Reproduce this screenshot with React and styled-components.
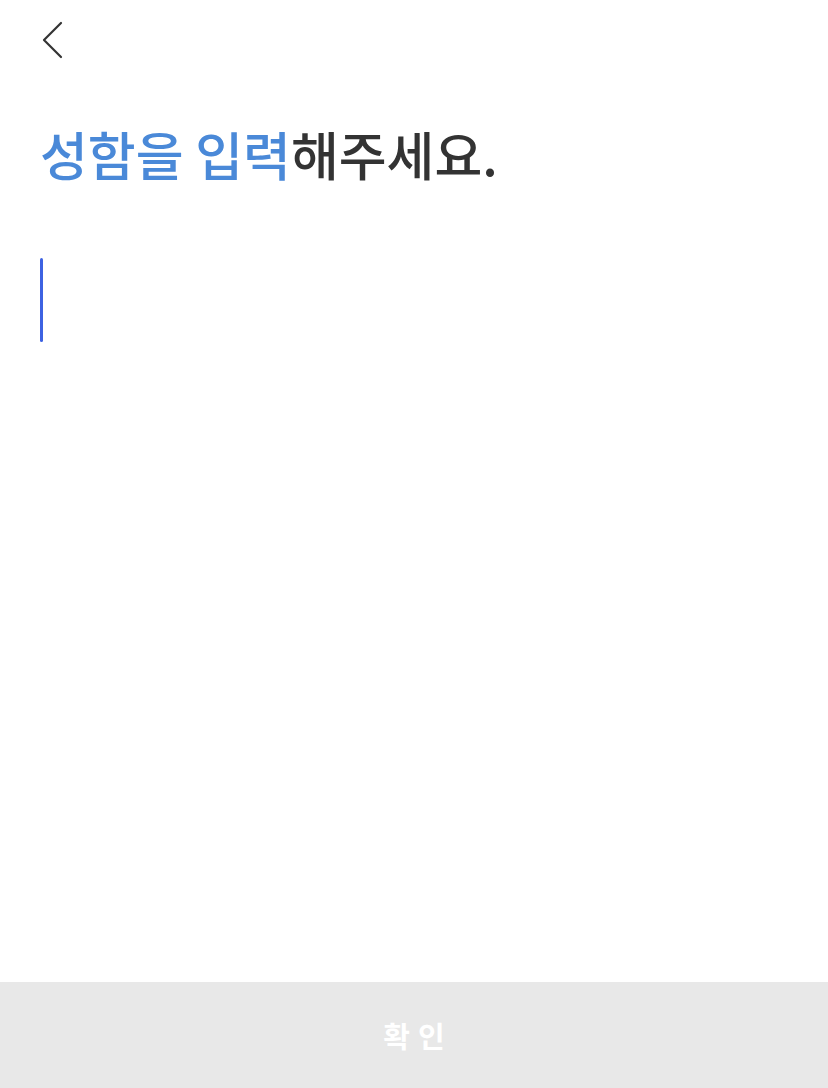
import React from 'react'
import styled, { createGlobalStyle } from 'styled-components'

const GlobalStyle = createGlobalStyle`
    html, body {
        margin: 0;
        padding: 0;
        background: #ffffff;
    }
    body {
        font-family: "Noto Sans CJK KR", "Noto Sans", sans-serif;
    }
`

const App = () => {
    return (
        <Page>
            <GlobalStyle />
            <Header>
                <BackButton aria-label="뒤로">
                    <svg width="24" height="40" viewBox="0 0 24 40" fill="none">
                        <path d="M21 3 L4 20 L21 37" stroke="#333333" strokeWidth="2.2" strokeLinecap="round" strokeLinejoin="round" />
                    </svg>
                </BackButton>
            </Header>
            <Content>
                <Title>
                    <Accent>성함을 입력</Accent>해주세요.
                </Title>
                <InputRow>
                    <Caret />
                </InputRow>
            </Content>
            <ConfirmButton disabled>확인</ConfirmButton>
        </Page>
    )
}

export default App

const Page = styled.div`
    display: flex;
    flex-direction: column;
    width: 828px;
    height: 1088px;
    background: #ffffff;
`

const Header = styled.div`
    display: flex;
    align-items: center;
    height: 80px;
    padding: 0 0 0 40px;
`

const BackButton = styled.button`
    display: flex;
    align-items: center;
    background: none;
    border: none;
    padding: 0;
    margin-top: -1px;
    cursor: pointer;
`

const Content = styled.div`
    flex: 1;
    display: flex;
    flex-direction: column;
    padding: 0 40px;
`

const Title = styled.h1`
    margin: 33px 0 0 0;
    font-size: 52px;
    font-weight: 500;
    line-height: 82px;
    letter-spacing: 0;
    color: #333333;
`

const Accent = styled.span`
    color: #4a89d8;
`

const InputRow = styled.div`
    display: flex;
    margin-top: 63px;
`

const Caret = styled.div`
    width: 3px;
    height: 84px;
    border-radius: 2px;
    background: #3d62e2;
`

const ConfirmButton = styled.button`
    height: 106px;
    border: none;
    background: #e8e8e8;
    color: #ffffff;
    font-family: "Noto Sans CJK KR", "Noto Sans", sans-serif;
    font-size: 29px;
    font-weight: 700;
    letter-spacing: 8px;
    text-indent: 8px;
`
